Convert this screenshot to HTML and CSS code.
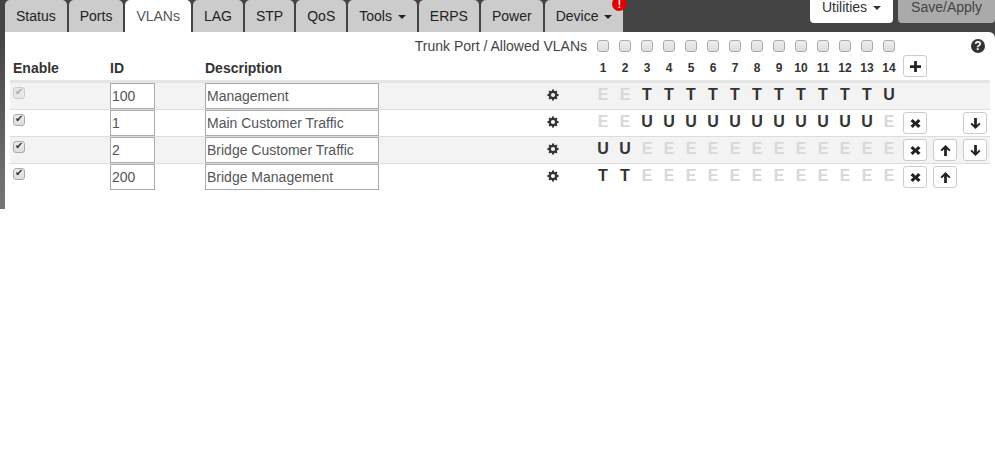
FILE: index.html
```html
<!DOCTYPE html>
<html lang="en">
<head>
    <meta charset="UTF-8">
    <title>VLANs</title>
    <link rel="stylesheet" href="styles.css">
</head>
<body>
    <svg width="0" height="0" class="sprites">
        <defs>
            <symbol id="i-cog" viewBox="-1 -1 26 26"><path fill-rule="evenodd" d="M10 0h4l.6 3.200 2 .8 2.600-1.800 2.600 2.600-1.800 2.600.8 2 3.200.6v4l-3.200.6-.8 2 1.800 2.600-2.600 2.600-2.600-1.800-2 .8-.6 3.200h-4l-.6-3.200-2-.8-2.600 1.800-2.600-2.600 1.800-2.600-.8-2L0 14v-4l3.200-.6.8-2-1.800-2.600 2.600-2.600L7.400 4l2-.8zM12 7.500a4.500 4.500 0 1 0 0 9 4.500 4.500 0 0 0 0-9z"/></symbol>
            <symbol id="i-x" viewBox="0 0 12 12"><path d="M3 1l3 3 3-3 2.500 2.500-3 2.500 3 2.500L9 11 6 8l-3 3-2.500-2.500 3-2.500-3-2.500z"/></symbol>
            <symbol id="i-up" viewBox="0 0 12 12"><path d="M6 0l5.500 5.500-1.500 1.300-2.500-2.300V12h-3V4.500L2 6.800.5 5.500z"/></symbol>
            <symbol id="i-down" viewBox="0 0 12 12"><path d="M6 12L.5 6.500 2 5.200l2.500 2.300V0h3v7.500L10 5.200l1.500 1.300z"/></symbol>
            <symbol id="i-plus" viewBox="0 0 12 12"><path d="M4.500 0h3v4.500H12v3H7.500V12h-3V7.500H0v-3h4.500z"/></symbol>
        </defs>
    </svg>

    <div class="topbar">
        <ul class="tabs">
            <li class="tab">Status</li>
            <li class="tab">Ports</li>
            <li class="tab active">VLANs</li>
            <li class="tab">LAG</li>
            <li class="tab">STP</li>
            <li class="tab">QoS</li>
            <li class="tab">Tools <span class="caret"></span></li>
            <li class="tab">ERPS</li>
            <li class="tab">Power</li>
            <li class="tab">Device <span class="caret"></span><span class="alert">!</span></li>
        </ul>
        <div class="actions">
            <div class="btn-top">Utilities <span class="caret"></span></div>
            <div class="btn-top save">Save/Apply</div>
        </div>
    </div>

    <div class="panel">
        <div class="row trunk">
            <div class="trunk-label">Trunk Port / Allowed VLANs</div>
            <div class="cell-port"><input type="checkbox" class="box"></div>
            <div class="cell-port"><input type="checkbox" class="box"></div>
            <div class="cell-port"><input type="checkbox" class="box"></div>
            <div class="cell-port"><input type="checkbox" class="box"></div>
            <div class="cell-port"><input type="checkbox" class="box"></div>
            <div class="cell-port"><input type="checkbox" class="box"></div>
            <div class="cell-port"><input type="checkbox" class="box"></div>
            <div class="cell-port"><input type="checkbox" class="box"></div>
            <div class="cell-port"><input type="checkbox" class="box"></div>
            <div class="cell-port"><input type="checkbox" class="box"></div>
            <div class="cell-port"><input type="checkbox" class="box"></div>
            <div class="cell-port"><input type="checkbox" class="box"></div>
            <div class="cell-port"><input type="checkbox" class="box"></div>
            <div class="cell-port"><input type="checkbox" class="box"></div>
            <div class="help">?</div>
        </div>

        <div class="row head">
            <div>Enable</div>
            <div>ID</div>
            <div>Description</div>
            <div></div>
            <div class="cell-port">1</div>
            <div class="cell-port">2</div>
            <div class="cell-port">3</div>
            <div class="cell-port">4</div>
            <div class="cell-port">5</div>
            <div class="cell-port">6</div>
            <div class="cell-port">7</div>
            <div class="cell-port">8</div>
            <div class="cell-port">9</div>
            <div class="cell-port">10</div>
            <div class="cell-port">11</div>
            <div class="cell-port">12</div>
            <div class="cell-port">13</div>
            <div class="cell-port">14</div>
            <div class="row-btns"><button class="icon-btn"><svg><use href="#i-plus"/></svg></button></div>
        </div>

        <div class="row vlan odd">
            <div class="cell-check"><input type="checkbox" class="box" checked disabled></div>
            <div><input class="field id" value="100"></div>
            <div><input class="field desc" value="Management"></div>
            <div class="cell-cog"><svg class="cog"><use href="#i-cog"/></svg></div>
            <div class="cell-port off">E</div>
            <div class="cell-port off">E</div>
            <div class="cell-port">T</div>
            <div class="cell-port">T</div>
            <div class="cell-port">T</div>
            <div class="cell-port">T</div>
            <div class="cell-port">T</div>
            <div class="cell-port">T</div>
            <div class="cell-port">T</div>
            <div class="cell-port">T</div>
            <div class="cell-port">T</div>
            <div class="cell-port">T</div>
            <div class="cell-port">T</div>
            <div class="cell-port">U</div>
            <div class="row-btns"></div>
        </div>

        <div class="row vlan">
            <div class="cell-check"><input type="checkbox" class="box" checked></div>
            <div><input class="field id" value="1"></div>
            <div><input class="field desc" value="Main Customer Traffic"></div>
            <div class="cell-cog"><svg class="cog"><use href="#i-cog"/></svg></div>
            <div class="cell-port off">E</div>
            <div class="cell-port off">E</div>
            <div class="cell-port">U</div>
            <div class="cell-port">U</div>
            <div class="cell-port">U</div>
            <div class="cell-port">U</div>
            <div class="cell-port">U</div>
            <div class="cell-port">U</div>
            <div class="cell-port">U</div>
            <div class="cell-port">U</div>
            <div class="cell-port">U</div>
            <div class="cell-port">U</div>
            <div class="cell-port">U</div>
            <div class="cell-port off">E</div>
            <div class="row-btns">
                <button class="icon-btn"><svg><use href="#i-x"/></svg></button>
                <span class="btn-gap"></span>
                <button class="icon-btn"><svg><use href="#i-down"/></svg></button>
            </div>
        </div>

        <div class="row vlan odd">
            <div class="cell-check"><input type="checkbox" class="box" checked></div>
            <div><input class="field id" value="2"></div>
            <div><input class="field desc" value="Bridge Customer Traffic"></div>
            <div class="cell-cog"><svg class="cog"><use href="#i-cog"/></svg></div>
            <div class="cell-port">U</div>
            <div class="cell-port">U</div>
            <div class="cell-port off">E</div>
            <div class="cell-port off">E</div>
            <div class="cell-port off">E</div>
            <div class="cell-port off">E</div>
            <div class="cell-port off">E</div>
            <div class="cell-port off">E</div>
            <div class="cell-port off">E</div>
            <div class="cell-port off">E</div>
            <div class="cell-port off">E</div>
            <div class="cell-port off">E</div>
            <div class="cell-port off">E</div>
            <div class="cell-port off">E</div>
            <div class="row-btns">
                <button class="icon-btn"><svg><use href="#i-x"/></svg></button>
                <button class="icon-btn"><svg><use href="#i-up"/></svg></button>
                <button class="icon-btn"><svg><use href="#i-down"/></svg></button>
            </div>
        </div>

        <div class="row vlan">
            <div class="cell-check"><input type="checkbox" class="box" checked></div>
            <div><input class="field id" value="200"></div>
            <div><input class="field desc" value="Bridge Management"></div>
            <div class="cell-cog"><svg class="cog"><use href="#i-cog"/></svg></div>
            <div class="cell-port">T</div>
            <div class="cell-port">T</div>
            <div class="cell-port off">E</div>
            <div class="cell-port off">E</div>
            <div class="cell-port off">E</div>
            <div class="cell-port off">E</div>
            <div class="cell-port off">E</div>
            <div class="cell-port off">E</div>
            <div class="cell-port off">E</div>
            <div class="cell-port off">E</div>
            <div class="cell-port off">E</div>
            <div class="cell-port off">E</div>
            <div class="cell-port off">E</div>
            <div class="cell-port off">E</div>
            <div class="row-btns">
                <button class="icon-btn"><svg><use href="#i-x"/></svg></button>
                <button class="icon-btn"><svg><use href="#i-up"/></svg></button>
            </div>
        </div>
    </div>
</body>
</html>
```

FILE: styles.css
```css
* {
    margin: 0;
    padding: 0;
    box-sizing: border-box;
}

body {
    font-family: "Liberation Sans", Arial, sans-serif;
    font-size: 14px;
    color: #333;
    background: white;
}

.sprites {
    display: block;
    height: 0;
}

/* dark bar runs 5px under the panel so its rounded corner shows */
.topbar {
    display: flex;
    justify-content: space-between;
    height: 37px;
    padding-left: 5px;
    background: #444;
}

.tabs {
    display: flex;
    list-style: none;
    gap: 2px;
    height: 32px;
}

.tab {
    position: relative;
    height: 32px;
    padding: 8px 11px 0;
    background: #ccc;
    color: #222;
    line-height: 16px;
    border-radius: 5px 5px 0 0;
}

.tab.active {
    background: white;
    color: #555;
}

.caret {
    display: inline-block;
    width: 0;
    height: 0;
    margin-left: 2px;
    vertical-align: middle;
    border-top: 4px solid;
    border-left: 4px solid transparent;
    border-right: 4px solid transparent;
}

/* the red disc is cut by the window top, the mark itself stays inside */
.alert {
    position: absolute;
    top: 0;
    right: -3px;
    z-index: 0;
    width: 14px;
    height: 11px;
    color: white;
    font-size: 10px;
    font-weight: bold;
    line-height: 10px;
    text-align: center;
}

.alert::before {
    content: "";
    position: absolute;
    top: -3px;
    left: 0;
    z-index: -1;
    width: 14px;
    height: 14px;
    border-radius: 50%;
    background: #e60000;
}

.actions {
    display: flex;
    gap: 5px;
}

.btn-top {
    width: 83px;
    height: 24px;
    margin-top: -1px;
    background: white;
    border-radius: 0 0 4px 4px;
    text-align: center;
    line-height: 16px;
    color: #333;
}

.btn-top.save {
    width: 97px;
    background: #aaa;
    color: #444;
}

.panel {
    height: 177px;
    margin-top: -5px;
    padding: 0 5px 0 10px;
    border-radius: 0 6px 0 0;
    background:
        linear-gradient(#444, #777) left top / 5px 100% no-repeat,
        white;
}

.row {
    display: grid;
    grid-template-columns: 100px 95px 335px 52px repeat(14, 22px) 1fr;
    align-items: center;
}

.trunk {
    height: 23px;
    padding-top: 5px;
}

.trunk-label {
    grid-column: 1 / 5;
    text-align: right;
    padding-right: 5px;
    color: #444;
}

.head {
    height: 28px;
    border-bottom: 3px solid #e5e5e5;
    font-weight: bold;
}

.head > div:first-child {
    padding-left: 3px;
}

.vlan {
    height: 27px;
    border-bottom: 1px solid #ddd;
}

.vlan:last-child {
    border-bottom-color: transparent;
}

.odd {
    background: #f3f3f3;
}

.cell-port {
    display: flex;
    justify-content: center;
    font-size: 12px;
}

.vlan .cell-port {
    margin-top: -3px;
    font-size: 16px;
    font-weight: bold;
    color: #333;
}

.vlan .cell-port.off {
    color: #d8d8d8;
}

.cell-check {
    display: flex;
    align-self: start;
    margin-top: 4px;
    padding-left: 3px;
}

.box {
    appearance: none;
    position: relative;
    display: block;
    width: 12px;
    height: 12px;
    border: 1px solid #aaa;
    border-radius: 3px;
    background: linear-gradient(#eee, #ddd);
}

.box:checked::after {
    content: "✔";
    position: absolute;
    left: 1px;
    top: -2px;
    font-size: 10px;
    color: #333;
}

.box:disabled {
    border-color: #ccc;
    background: #e8e8e8;
}

.box:disabled::after {
    color: #aaa;
}

.field {
    display: block;
    height: 26px;
    border: 1px solid #aaa;
    padding: 0 1px;
    font-family: inherit;
    font-size: 14px;
    color: #555;
    background: white;
}

.field.id {
    width: 45px;
}

.field.desc {
    width: 174px;
}

.cell-cog {
    display: flex;
    margin-top: -3px;
    padding-left: 7px;
}

.cog {
    width: 12px;
    height: 12px;
    fill: #333;
}

.help {
    grid-column: 20;
    justify-self: end;
    width: 14px;
    height: 14px;
    margin-right: 5px;
    border-radius: 50%;
    background: #333;
    color: white;
    font-size: 12px;
    font-weight: bold;
    line-height: 14px;
    text-align: center;
}

.row-btns {
    display: flex;
    gap: 6px;
    padding-left: 3px;
}

.head .row-btns {
    margin-top: -3px;
}

.btn-gap {
    width: 24px;
}

.icon-btn {
    display: flex;
    align-items: center;
    justify-content: center;
    width: 24px;
    height: 22px;
    border: 1px solid #ccc;
    border-radius: 3px;
    background: white;
}

.icon-btn svg {
    width: 11px;
    height: 11px;
    fill: #222;
}
```
